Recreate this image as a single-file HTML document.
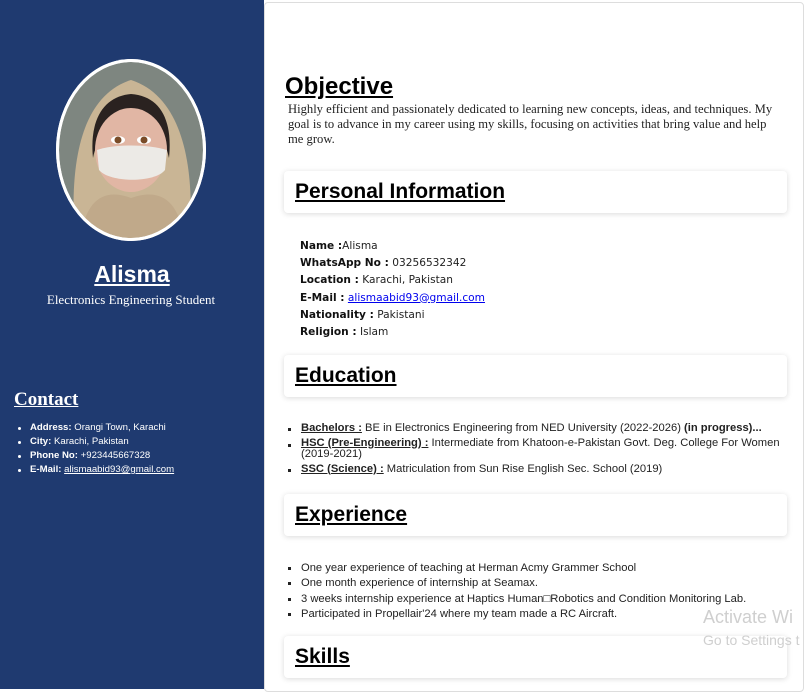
<!DOCTYPE html>
<html><head><meta charset="utf-8"><style>
*{margin:0;padding:0;box-sizing:border-box}
body{width:806px;height:689px;overflow:hidden;background:#fff;font-family:"Liberation Sans",Arial,sans-serif;position:relative;color:#222}
.side{position:absolute;left:0;top:0;width:264px;height:689px;background:#1f3a70}
.frame{position:absolute;left:264px;top:2px;width:540px;height:690px;border:1px solid #ddd;border-radius:4px}
.a{position:absolute}
.card{position:absolute;left:284px;width:503px;height:42px;background:#fff;border-radius:4px;box-shadow:0 1px 6px rgba(0,0,0,.15)}
.card h2{position:absolute;left:11px;top:9px;font-size:21px;font-weight:bold;text-decoration:underline;color:#000}
.info{position:absolute;left:300px;top:238px;font-family:"DejaVu Sans",sans-serif;font-size:10.6px;line-height:17.2px;color:#222}
.info b{font-weight:600;color:#111}
ul.l{position:absolute;left:301px;font-size:11.2px;line-height:13.5px;list-style:none;color:#222}
ul.l li{position:relative}
ul.l li:before{content:"";position:absolute;left:-13px;top:6px;width:3px;height:3px;background:#222}
ul.l u{font-weight:bold}
ul.c{position:absolute;left:30px;top:421px;color:#fff;font-size:9.6px;line-height:14px;list-style:none}
ul.c li{position:relative}
ul.c li:before{content:"";position:absolute;left:-12px;top:6px;width:3px;height:3px;background:#fff;border-radius:50%}
</style></head><body>
<div class="side"></div>
<div class="frame"></div>
<svg class="a" style="left:55px;top:58px" width="152" height="184" viewBox="0 0 152 184">
<defs><clipPath id="c"><ellipse cx="76" cy="92" rx="72" ry="88"/></clipPath></defs>
<ellipse cx="76" cy="92" rx="75" ry="91" fill="#fff"/>
<g clip-path="url(#c)">
<rect width="152" height="184" fill="#7e8680"/>
<path d="M20 184 C15 120 20 40 76 22 C132 40 140 120 134 184Z" fill="#c9b595"/>
<path d="M38 100 C34 60 50 38 76 36 C104 38 118 60 114 100 C110 80 100 70 76 68 C52 70 42 80 38 100Z" fill="#2a2220"/>
<ellipse cx="76" cy="92" rx="36" ry="42" fill="#e1b6a4"/>
<ellipse cx="63" cy="82" rx="7" ry="4" fill="#fff"/><circle cx="63" cy="82" r="3.5" fill="#7a4c28"/>
<ellipse cx="89" cy="82" rx="7" ry="4" fill="#fff"/><circle cx="89" cy="82" r="3.5" fill="#7a4c28"/>
<path d="M42 92 C60 86 92 86 112 92 L110 112 C100 125 55 125 44 112Z" fill="#eceae6"/>
<path d="M25 184 C30 140 50 130 76 140 C104 130 124 140 130 184Z" fill="#c0a98a"/>
</g>
<ellipse cx="76" cy="92" rx="73.5" ry="89.5" fill="none" stroke="#fff" stroke-width="3"/>
</svg>
<div class="a" style="left:0;width:264px;top:261px;text-align:center;color:#fff;font-size:23px;font-weight:bold;"><u>Alisma</u></div>
<div class="a" style="left:0;width:262px;top:292px;text-align:center;color:#fff;font-family:'Liberation Serif',serif;font-size:13px">Electronics Engineering Student</div>
<div class="a" style="left:14px;top:389px;color:#fff;font-family:'Liberation Serif',serif;font-size:19px;font-weight:bold;text-decoration:underline">Contact</div>
<ul class="c">
<li><b>Address:</b> Orangi Town, Karachi</li>
<li><b>City:</b> Karachi, Pakistan</li>
<li><b>Phone No:</b> +923445667328</li>
<li><b>E-Mail:</b> <u>alismaabid93@gmail.com</u></li>
</ul>
<div class="a" style="left:285px;top:73px;font-size:24px;font-weight:bold;text-decoration:underline;color:#000">Objective</div>
<div class="a" style="left:288px;top:102px;width:496px;font-family:'Liberation Serif',serif;font-size:12.6px;line-height:15px;color:#222">Highly efficient and passionately dedicated to learning new concepts, ideas, and techniques. My goal is to advance in my career using my skills, focusing on activities that bring value and help me grow.</div>
<div class="card" style="top:171px"><h2>Personal Information</h2></div>
<div class="info">
<b>Name :</b>Alisma<br><b>WhatsApp No :</b> 03256532342<br><b>Location :</b> Karachi, Pakistan<br><b>E-Mail :</b> <a style="color:#00e;text-decoration:underline">alismaabid93@gmail.com</a><br><b>Nationality :</b> Pakistani<br><b>Religion :</b> Islam
</div>
<div class="card" style="top:355px"><h2>Education</h2></div>
<ul class="l" style="top:422px;width:490px">
<li><u>Bachelors :</u> BE in Electronics Engineering from NED University (2022-2026) <b>(in progress)...</b></li>
<li style="line-height:11.5px;margin-top:2px"><u>HSC (Pre-Engineering) :</u> Intermediate from Khatoon-e-Pakistan Govt. Deg. College For Women (2019-2021)</li>
<li style="margin-top:2px"><u>SSC (Science) :</u> Matriculation from Sun Rise English Sec. School (2019)</li>
</ul>
<div class="card" style="top:494px"><h2>Experience</h2></div>
<ul class="l" style="top:561px;line-height:15.3px">
<li>One year experience of teaching at Herman Acmy Grammer School</li>
<li>One month experience of internship at Seamax.</li>
<li>3 weeks internship experience at Haptics Human□Robotics and Condition Monitoring Lab.</li>
<li>Participated in Propellair'24 where my team made a RC Aircraft.</li>
</ul>
<div class="card" style="top:636px"><h2>Skills</h2></div>
<div class="a" style="left:703px;top:607px;font-size:18px;color:#cfcfcf;white-space:nowrap">Activate Wi</div>
<div class="a" style="left:703px;top:632px;font-size:14px;color:#cfcfcf;white-space:nowrap">Go to Settings t</div>
</body></html>
